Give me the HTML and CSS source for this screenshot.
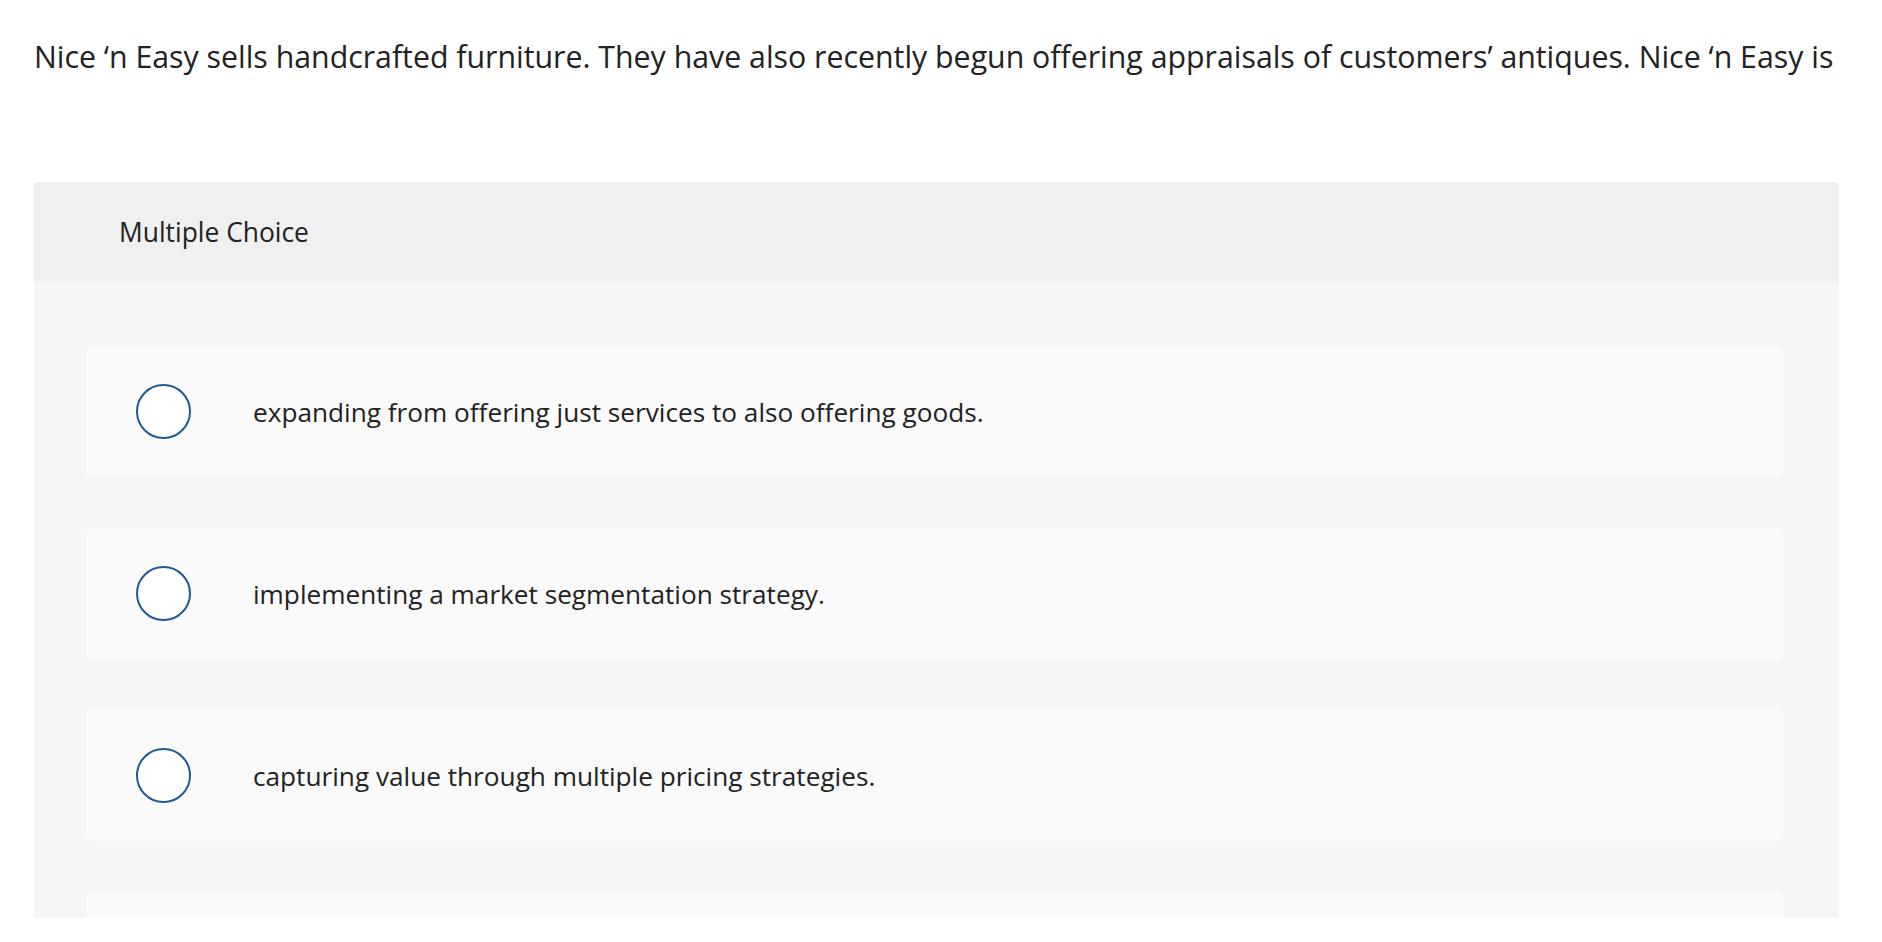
FILE: index.html
```html
<!DOCTYPE html>
<html lang="en">
<head>
<meta charset="utf-8">
<title>Multiple Choice</title>
<link rel="stylesheet" href="styles.css">
</head>
<body>
<p class="question">Nice ‘n Easy sells handcrafted furniture. They have also recently begun offering appraisals of customers’ antiques. Nice ‘n Easy is</p>
<section class="card">
  <header class="card-header">Multiple Choice</header>
  <div class="card-body">
    <div class="option"><span class="radio"></span><span class="label">expanding from offering just services to also offering goods.</span></div>
    <div class="option"><span class="radio"></span><span class="label">implementing a market segmentation strategy.</span></div>
    <div class="option"><span class="radio"></span><span class="label">capturing value through multiple pricing strategies.</span></div>
    <div class="option"><span class="radio"></span><span class="label"></span></div>
  </div>
</section>
</body>
</html>
```
FILE: styles.css
```css
html, body {
  margin: 0;
  padding: 0;
  background: #ffffff;
}
body {
  font-family: "Open Sans", Lato, sans-serif;
  color: #222222;
  overflow: hidden;
}
.question {
  margin: 0;
  padding: 37px 0 0 34px;
  font-size: 30.3px;
  line-height: 40px;
  white-space: nowrap;
  color: #222222;
}
.card {
  margin: 105px 0 0 34px;
  width: 1805px;
  height: 736px;
  overflow: hidden;
  border-radius: 4px 4px 0 0;
  background: #f5f5f5;
}
.card-header {
  height: 100px;
  display: flex;
  align-items: center;
  padding-left: 85px;
  background: #f0f0f0;
  font-size: 26.4px;
  color: #222222;
}
.card-body {
  display: flex;
  flex-direction: column;
  gap: 51px;
  padding: 64px 56px 0 52px;
}
.option {
  flex: none;
  height: 131px;
  display: flex;
  align-items: center;
  padding-left: 50px;
  background: #fafafa;
  border-radius: 6px;
}
.radio {
  flex: none;
  width: 51px;
  height: 51px;
  border: 2px solid #1f5a94;
  border-radius: 50%;
  background: #ffffff;
  margin-right: 62px;
}
.label {
  font-size: 26.2px;
  color: #222222;
}
```
